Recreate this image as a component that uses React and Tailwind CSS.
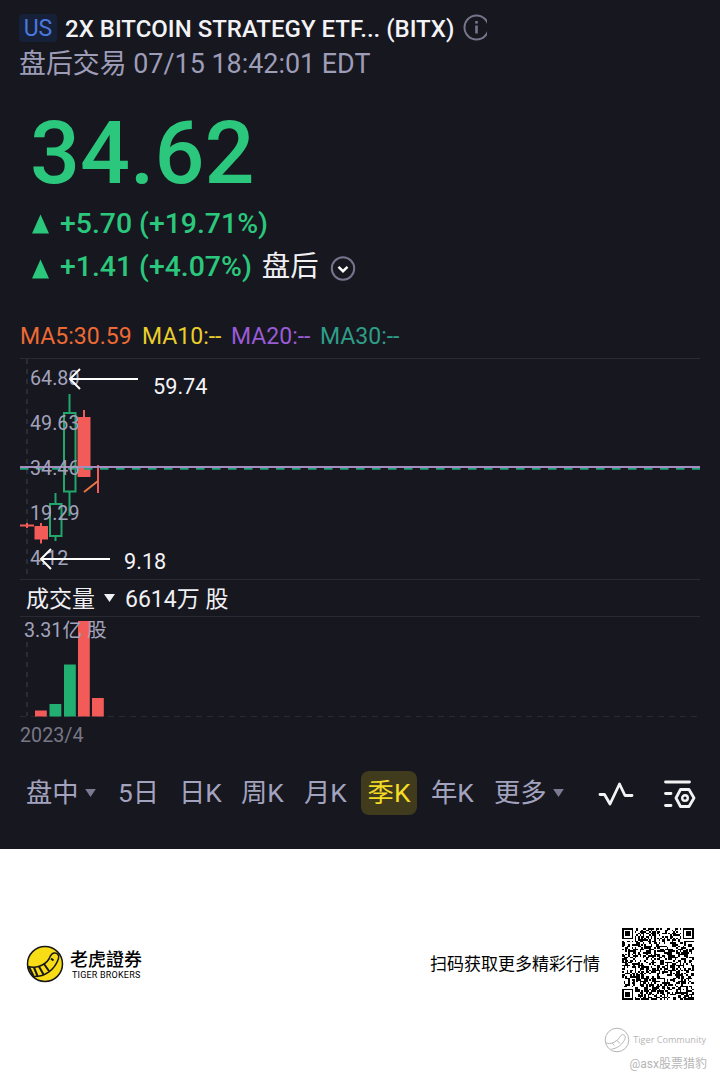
import React from 'react';
import { clsx } from 'clsx';

const AXIS_LABELS = [
  { y: 385, text: '64.80' },
  { y: 430, text: '49.63' },
  { y: 475, text: '34.46' },
  { y: 520, text: '19.29' },
  { y: 565, text: '4.12' },
];

const VOLUME_BARS = [
  { x: 35, y: 710.5, color: '#f25b58' },
  { x: 49.5, y: 704, color: '#21b071' },
  { x: 64, y: 664.5, color: '#21b071' },
  { x: 78, y: 621, color: '#f25b58' },
  { x: 92, y: 698, color: '#f25b58' },
];

const TABS = [
  { label: '盘中', width: 'w-[92px]', caret: true },
  { label: '5日', width: 'w-[61px]' },
  { label: '日K', width: 'w-[62px]' },
  { label: '周K', width: 'w-[63px]' },
  { label: '月K', width: 'w-[57px]' },
  { label: '季K', width: 'w-[56px]', active: true },
  { label: '年K', width: 'w-[63px]' },
  { label: '更多', width: 'w-[91px]', caret: true },
];

const QR_SIZE = 45;

function isDark(col, row) {
  // finder patterns in three corners
  const corners = [[0, 0], [QR_SIZE - 7, 0], [0, QR_SIZE - 7]];
  for (const [cx, cy] of corners) {
    const dx = col - cx;
    const dy = row - cy;
    if (dx >= -1 && dx <= 7 && dy >= -1 && dy <= 7) {
      const ring = Math.max(Math.abs(dx - 3), Math.abs(dy - 3));
      return ring === 3 || ring <= 1;
    }
  }
  // alignment pattern
  const ring = Math.max(Math.abs(col - 38), Math.abs(row - 38));
  if (ring <= 2) return ring !== 1;
  if (row === 6) return col % 2 === 0;
  if (col === 6) return row % 2 === 0;
  let h = (col * 374761393 + row * 668265263) | 0;
  h = Math.imul(h ^ (h >>> 13), 1274126177);
  return ((h ^ (h >>> 16)) & 255) < 130;
}

function QrCode() {
  let d = '';
  for (let row = 0; row < QR_SIZE; row++) {
    for (let col = 0; col < QR_SIZE; col++) {
      if (isDark(col, row)) d += `M${col} ${row}h1v1h-1z`;
    }
  }
  return (
    <svg className="size-[72px]" viewBox={`0 0 ${QR_SIZE} ${QR_SIZE}`} shapeRendering="crispEdges">
      <path d={d} fill="#000" />
    </svg>
  );
}

function UpTriangle() {
  return (
    <svg width="18" height="20" viewBox="0 0 18 20" className="shrink-0">
      <path d="M9.500 .5 18 19.500H1Z" fill="#2bc77d" />
    </svg>
  );
}

function Header() {
  return (
    <header className="h-[84px] pl-[19px] pt-[12px]">
      <div className="flex h-[31px] items-center">
        <span className="flex h-[28px] w-[38px] items-center justify-center rounded bg-[#172039] pt-[3px] text-[23px] text-[#4b78dd]">US</span>
        <h1 className="ml-[8px] w-[398px] whitespace-nowrap pt-[2px] text-[24px] font-medium text-[#f3f3f6]">
          2X BITCOIN STRATEGY ETF... (BITX)
        </h1>
        <svg width="24" height="28" viewBox="0 0 24 28" fill="none" stroke="#77758a" strokeWidth="2">
          <circle cx="13.500" cy="13.500" r="12" />
          <path d="M13.500 11.500v8" strokeWidth="2.600" />
          <path d="M13.500 7v2.600" strokeWidth="2.600" />
        </svg>
      </div>
      <div className="flex h-[43px] items-center whitespace-nowrap text-[26.900px] text-[#9d9db8]">盘后交易 07/15 18:42:01 EDT</div>
    </header>
  );
}

function Quote() {
  return (
    <section className="flex h-[232px] flex-col pl-[31px] font-medium text-[#2bc77d]">
      <div className="-ml-px mt-[19px] flex h-[99px] items-center text-[88px] leading-none">34.62</div>
      <div className="flex h-[43px] items-center whitespace-nowrap text-[28.400px]">
        <UpTriangle />
        <span className="ml-[11px] pt-[2px]">+5.70 (+19.71%)</span>
      </div>
      <div className="flex h-[43px] items-center whitespace-nowrap text-[28.400px]">
        <span className="mt-[4px]"><UpTriangle /></span>
        <span className="ml-[11px] pt-[2px]">+1.41 (+4.07%)</span>
        <span className="ml-[10px] pt-px font-normal text-[#f0f0f4]">盘后</span>
        <svg width="26" height="26" viewBox="0 0 26 26" fill="none" className="ml-[11px] mt-[4px]">
          <circle cx="13" cy="12.500" r="11.200" stroke="#77758e" strokeWidth="2" />
          <path d="m8.500 10.800 4.500 4.400 4.500-4.400" stroke="#fff" strokeWidth="2.400" />
        </svg>
      </div>
    </section>
  );
}

function Chart() {
  return (
    <svg width="720" height="434" viewBox="0 316 720 434" className="block" fill="none">
      <g fontSize="23">
        <text x="20" y="344" fill="#ed6a35">MA5:30.59</text>
        <text x="142" y="344" fill="#e8cd2c">MA10:--</text>
        <text x="231" y="344" fill="#9a5bd6">MA20:--</text>
        <text x="320" y="344" fill="#2e9d88">MA30:--</text>
      </g>

      <g stroke="#2a2a33">
        <path d="M20 358.500h680M20 579.500h680M20 616.500h680" />
        <path d="M27 359v220M27 622v94" strokeDasharray="5 5" strokeWidth="1.500" stroke="#34343d" />
        <path d="M20 716.500h680" strokeDasharray="6 5" />
      </g>

      {/* candles */}
      <g strokeWidth="2" stroke="#f25b58">
        <path d="M20 525.500h14M27 523v5M41 523v20.500M84 410v10M98 465v28" />
        <path d="M34.500 526h13.500v13.500h-13.500zM77.500 417h13v60h-13z" fill="#f25b58" stroke="none" />
      </g>
      <g strokeWidth="2" stroke="#21a66c">
        <path d="M55.500 493v10M55.500 536v5M69.500 394v18M69.500 492v24" />
        <path d="M50 504h11.500v32H50zM64 413h11.500v78.500H64z" />
      </g>
      <path d="m84 492 14-11" stroke="#ed7545" strokeWidth="2" />

      <path d="M20 468.700h680" stroke="#21a37b" strokeWidth="2" strokeDasharray="8.500 7.500" />
      <path d="M20 467h680" stroke="#a58bc0" strokeWidth="2" />

      <g fontSize="19.700" fill="#a3a3bc">
        {AXIS_LABELS.map((label) => (
          <text key={label.text} x="30" y={label.y}>{label.text}</text>
        ))}
      </g>

      {/* high / low markers */}
      <g stroke="#fff" strokeWidth="2">
        <path d="M70 379h68M80 369l-10 10 10 10" />
        <path d="M41 559h69M51 549l-10 10 10 10" />
      </g>
      <g fontSize="21.700" fill="#f3f3f6">
        <text x="153" y="394">59.74</text>
        <text x="124" y="569">9.18</text>
      </g>

      <g fontSize="23" fill="#f0f0f4">
        <text x="26" y="607">成交量</text>
        <text x="125" y="607">6614万 股</text>
      </g>
      <path d="M104 594h11l-5.500 8z" fill="#f0f0f4" />

      {VOLUME_BARS.map((bar) => (
        <rect key={bar.x} x={bar.x} y={bar.y} width="11.800" height={716.5 - bar.y} fill={bar.color} />
      ))}
      <text x="24" y="637" fontSize="19.700" fill="#a3a3bc">3.31亿 股</text>
      <text x="20" y="742" fontSize="19.700" fill="#777786">2023/4</text>
    </svg>
  );
}

function PeriodTabs() {
  return (
    <nav className="flex h-[99px] items-start pl-[26px] pt-[21px]">
      {TABS.map((tab) => (
        <button
          key={tab.label}
          className={clsx(
            'flex h-[44px] shrink-0 items-center whitespace-nowrap pt-px text-[26.300px]',
            tab.width,
            tab.active ? 'mr-[14px] justify-center rounded-lg bg-[#403b1d] text-[#f4dc25]' : 'text-[#a3a3bf]',
          )}
        >
          {tab.label}
          {tab.caret && (
            <svg width="11" height="8" viewBox="0 0 12 9" className="mb-[2px] ml-[6px]">
              <path d="M0 0h12L6 9z" fill="#7c7a92" />
            </svg>
          )}
        </button>
      ))}
      <svg width="36" height="28" viewBox="0 0 36 28" fill="none" stroke="#f3f3f6" strokeWidth="2.800" strokeLinecap="round" strokeLinejoin="round" className="ml-[13px] mt-[10px] shrink-0">
        <path d="M2 13.500h4.500l5.500 9.500L21.500 3l5.500 11.500H34" />
      </svg>
      <svg width="34" height="32" viewBox="0 0 34 32" fill="none" stroke="#f3f3f6" strokeWidth="2.800" strokeLinecap="round" strokeLinejoin="round" className="ml-[29px] mt-[8px] shrink-0">
        <path d="M2.500 3h24M2.500 14.500h5.500M2.500 26.500h5.500" />
        <path d="M17.500 10.500h8.500l5 8.500-5 8.500h-8.500L13 19z" />
        <circle cx="22" cy="19" r="2.800" strokeWidth="2.400" />
      </svg>
    </nav>
  );
}

function TigerLogo() {
  return (
    <svg width="38" height="38" viewBox="0 0 38 38" fill="none">
      <circle cx="19" cy="19" r="17.500" fill="#f8dc16" stroke="#171717" strokeWidth="1.500" />
      <path d="M2 21.500c7 2 16 0 21-7.500 1-2.500 2-5.500 5-6 3.500-.5 5.500 2.500 4.500 5.500C29 24.500 19 32 7 31.500" stroke="#171717" strokeWidth="1.500" />
      <path d="M3 22 7.500 31M8 22.500l3.500 8.500M13 21.500l4.500 8M18 19l5 7M25 13.500l2.500 2" stroke="#171717" strokeWidth="2" />
    </svg>
  );
}

function Footer() {
  return (
    <footer className="flex h-[230px] flex-col bg-white text-black">
      <div className="mt-[78px] flex h-[74px] items-center pl-[26px]">
        <TigerLogo />
        <div className="ml-[6px] w-[360px] pt-[2px]">
          <div className="text-[18px] font-medium leading-[20px]">老虎證券</div>
          <div className="pl-[2px] text-[9px] leading-[11px] tracking-[0.200px]">TIGER BROKERS</div>
        </div>
        <div className="w-[192px] whitespace-nowrap pt-[2px] text-[17px]">扫码获取更多精彩行情</div>
        <QrCode />
      </div>
      <div className="mt-[25px] flex flex-col items-end pr-[14px] text-[#b5b5b5]">
        <div className="flex h-[28px] items-center">
          <svg width="26" height="26" viewBox="0 0 26 26" fill="none" stroke="#b5b5b5">
            <circle cx="13" cy="13" r="11.800" />
            <path d="M2 16c5 1.500 9-.5 13-4.500 1-2.500 3-4.500 5-3.500s1.500 4-.5 6.500c-3 4.500-7 7-12 7.500M8 16l2.500 2.500M13 13.500l3 3" />
          </svg>
          <span className="ml-[3px] font-['Open_Sans'] text-[9.100px]">Tiger Community</span>
        </div>
        <div className="mr-[-1px] pt-px text-[12px] leading-[18px]">@asx股票猎豹</div>
      </div>
    </footer>
  );
}

export default function App() {
  return (
    <div className="h-[1079px] w-[720px] overflow-hidden bg-[#17171f] font-['Roboto','Noto_Sans_CJK_SC',sans-serif]">
      <Header />
      <Quote />
      <Chart />
      <PeriodTabs />
      <Footer />
    </div>
  );
}
